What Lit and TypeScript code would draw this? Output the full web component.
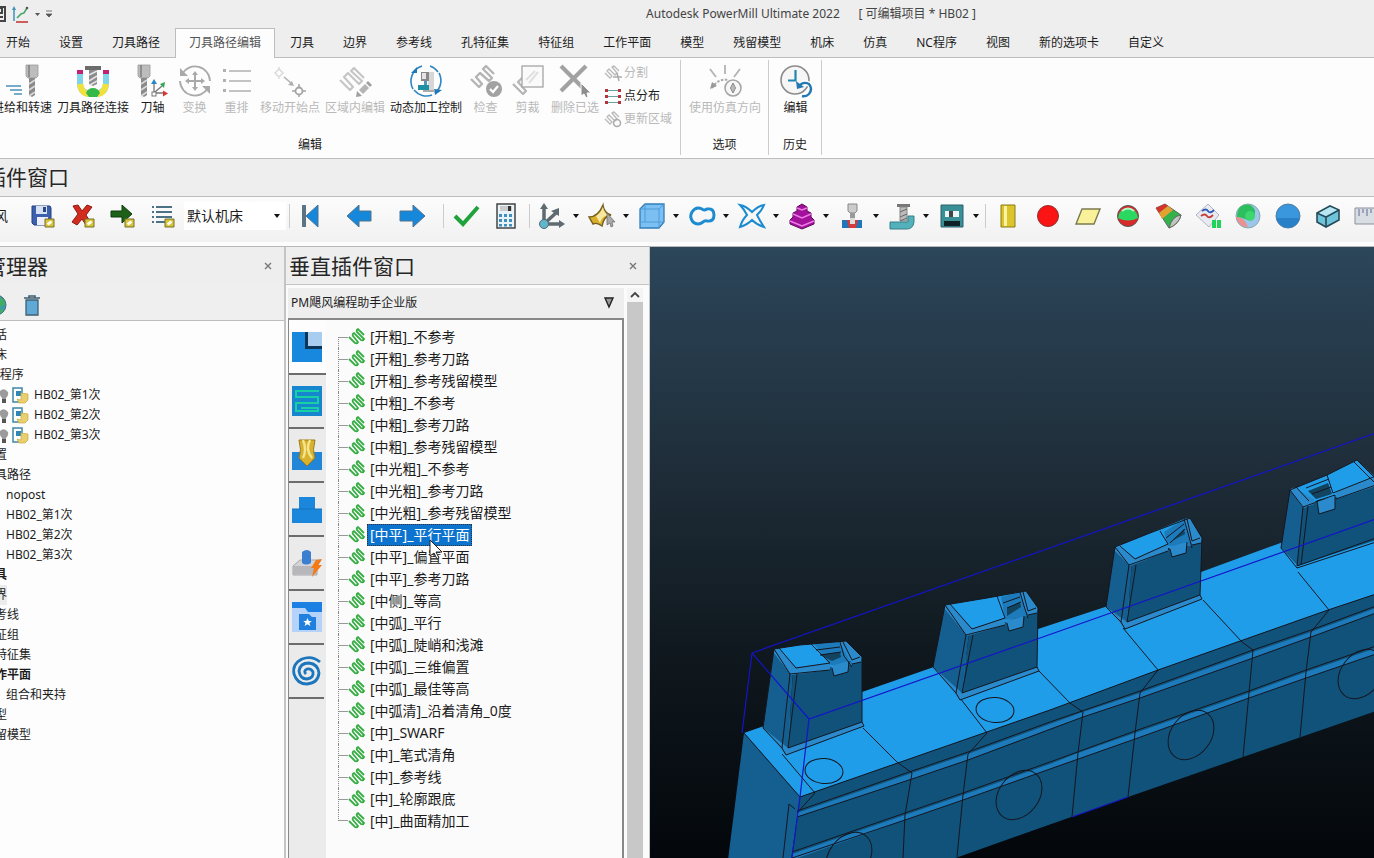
import { LitElement, html, svg, css, TemplateResult, SVGTemplateResult } from "lit";
import { customElement } from "lit/decorators.js";
import { classMap } from "lit/directives/class-map.js";

type Art = SVGTemplateResult;

const icon = (size: number, art: Art): TemplateResult =>
  html`<svg class="icon" width=${size} height=${size} viewBox="0 0 ${size} ${size}" fill="none" aria-hidden="true">${art}</svg>`;

/* ---------- ribbon artwork (32 x 32) ---------- */
const cutter = (x: number): Art => svg`
  <path d="M${x} 0h12v11l-2 2h-8l-2-2z" fill="#bdbdbd" stroke="#9a9a9a" stroke-width=".8"/>
  <path d="M${x + 2} 0h2v12h-2z" fill="#8d8d8d"/>
  <path d="M${x + 3} 13h6v17l-3 2-3-2z" fill="#8a8a8a"/>
  <path d="M${x + 3} 19l6-4M${x + 3} 25l6-4M${x + 3} 31l6-4" stroke="#d9d9d9" stroke-width="1.6"/>`;

const ribbonArt: Record<string, Art> = {
  feed: svg`<path d="M0 21h15M4 25h12M8 29h8" stroke="#4a90b8" stroke-width="1.300"/>${cutter(20)}`,
  link: svg`
    <path d="M3 5v13c0 8 5 11 13 11s13-3 13-11V5" stroke="#7fd4ea" stroke-width="6"/>
    <path d="M3 19c1 7 5 10 8 10M29 19c-1 7-5 10-8 10" stroke="#f2e13a" stroke-width="6"/>
    <path d="M9 28q2-5 7-5t7 5l-3 4h-8z" fill="#35b84a"/>
    <path d="M0 5h6v4H0zM26 5h6v4h-6z" fill="#c22173"/>
    <path d="M8 1h16v4H8z" fill="#6c6c6c"/><path d="M12 5h8v14l-4 2-4-2z" fill="#8b8b8b"/>
    <path d="M12 10l8-4M12 16l8-5M13 20l7-4" stroke="#e3e3e3" stroke-width="1.500"/>`,
  axis: svg`${cutter(1)}
    <path d="M17 28V18M18 28h9M18 27l7-6" stroke="#777" stroke-width="1.300"/>
    <path d="M17 14l3 5h-6z" fill="#2b86c4"/><path d="M31 28.500l-5 3v-6z" fill="#d33"/><path d="M28 17l-1 6-4-4z" fill="#2fa84f"/>
    <rect x="15" y="27" width="4" height="4" fill="#fff" stroke="#777"/>`,
  transform: svg`
    <path d="M3 9A15 15 0 0 1 31 16M29 23A15 15 0 0 1 1 16" stroke="#a9a9a9" stroke-width="1.800"/>
    <path d="M1 3v8h8zM31 29v-8h-8z" fill="#a9a9a9"/>
    <path d="M16 9v15M9 16h15" stroke="#a9a9a9" stroke-width="2"/>
    <path d="M16 6l3 4h-6zM16 26l3-4h-6zM6 16l4-3v6zM26 16l-4-3v6z" fill="#a9a9a9"/>`,
  reorder: svg`
    <path d="M8 6h22M8 16h22M8 26h22" stroke="#b0b0b0" stroke-width="1.400"/>
    <path d="M2 4h3v3H2zM2 14h3v3H2zM2 24h3v3H2z" fill="#b0b0b0"/>`,
  start: svg`
    <path d="M5 4l4 4-4 4-4-4zM5 2v3M5 11v3" stroke="#d8d8d8" stroke-width="1.400"/>
    <path d="M10 12l7 6" stroke="#b0b0b0" stroke-width="1.600"/><path d="M20 21l-6-1 4-4z" fill="#b0b0b0"/>
    <circle cx="25" cy="26" r="3.500" stroke="#a3a3a3" stroke-width="1.800"/>
    <path d="M25 19v4M25 29v3M18 26h4M28 26h4" stroke="#a3a3a3" stroke-width="1.500"/>`,
  region: svg`
    <path d="M1 15l10 10 3-3L5 12l4-4 11 11 3-3L12 6l3-3 10 10" stroke="#c6c6c6" stroke-width="2.200" stroke-linejoin="round"/>
    <path d="M20 25l6-6 4 4-6 6z" fill="#b4b4b4"/><path d="M18 26l5 5-6 1z" fill="#9f9f9f"/><path d="M27 18l2-2 4 4-2 2z" fill="#9f9f9f"/>`,
  dynamic: svg`
    <path d="M3 24A16 16 0 0 1 12 1M20 1a16 16 0 0 1 8 6M29 8a16 16 0 0 1-4 20M22 30A16 16 0 0 1 4 25" stroke="#2f87c2" stroke-width="1.600"/>
    <path d="M7 2v6H1zM32 25l-7 5-1-6z" fill="#1e78b8"/>
    <path d="M18 7h6v18h-6z" fill="#d6d6d6"/><path d="M11 7h8v9h-8z" fill="#888"/><path d="M12 8h4v6h-4z" fill="#e5e5e5"/><path d="M14 16h3v5h-3z" fill="#4b98b8"/>
    <path d="M8 20h11v5H8z" fill="#1d90a4"/><path d="M13 25h12v2H13z" fill="#aaa"/>`,
  check: svg`
    <path d="M1 14l8 8 3-3-6-7 4-4 9 8 3-3-9-9 3-3 8 8" stroke="#b5b5b5" stroke-width="2.400" stroke-linejoin="round"/>
    <circle cx="24" cy="24" r="8" fill="#a2a2a2"/><path d="M20 24l3 3 5-6" stroke="#fff" stroke-width="2.200"/>`,
  trim: svg`
    <path d="M1 19l10 10 3-3-8-9 4-4 5 4" stroke="#b5b5b5" stroke-width="2.200" stroke-linejoin="round"/>
    <rect x="10" y="1" width="21" height="21" fill="#fafafa" stroke="#a5a5a5" stroke-width="1.300"/>
    <path d="M14 15l9-9M17 18l9-11" stroke="#e0e0e0" stroke-width="2"/>`,
  remove: svg`
    <path d="M2 1l25 25M27 1L2 26" stroke="#a2a2a2" stroke-width="4.200"/>
    <path d="M22 18v13l3-2 2 4 2-1-1-4h4z" fill="#8e8e8e" stroke="#fff"/>`,
  sim: svg`
    <path d="M1 4l6 8M16 0v9M31 4l-6 8" stroke="#b3b3b3" stroke-width="1.800"/>
    <path d="M3 23q6-10 17-8" stroke="#aaa" stroke-width="2" stroke-dasharray="2.500 1.500"/><path d="M1 24l2-7 5 4z" fill="#999"/>
    <circle cx="24" cy="23" r="8" fill="#f7f7f7" stroke="#a6a6a6" stroke-width="1.600"/><path d="M24 18l2.500 5-2.500 5-2.500-5z" fill="#bbb" stroke="#888"/>`,
  history: svg`
    <circle cx="15" cy="15" r="14" fill="#f6f6f6" stroke="#8b8b8b" stroke-width="1.600"/>
    <path d="M15.500 5v10.500H8" stroke="#1f86b3" stroke-width="2.200"/>
    <path d="M19 21q4-5 10-2 4 5 0 10-3 3-7 2" stroke="#fdfdfd" stroke-width="5"/>
    <path d="M19 21q4-5 10-2 4 5 0 10-3 3-7 2" stroke="#2477b2" stroke-width="2.400"/><path d="M16 16l1 8 7-2z" fill="#2477b2"/>`,
};

const smallSnake: Art = svg`<path d="M0 8l5 5 2-2-5-5 2-2 6 6 2-2-5-6 2-1 5 5" stroke="#bbb" stroke-width="1.400" stroke-linejoin="round"/>`;
const smallArt: Record<string, Art> = {
  split: svg`${smallSnake}<path d="M8 12h9M12 8l2 8" stroke="#aaa" stroke-width="1.500"/>`,
  points: svg`<path d="M2 2.500h13M2 8.500h13M2 14.500h13" stroke="#68a3a3" stroke-width="1.200"/>
    <path d="M0 1h3v3H0zM13 1h3v3H13zM0 7h3v3H0zM13 7h3v3H13zM0 13h3v3H0zM13 13h3v3H13z" fill="#b8323c"/>`,
  refresh: svg`${smallSnake}<circle cx="12" cy="12" r="3.500" stroke="#aaa" stroke-width="1.500"/>`,
};

/* ---------- horizontal toolbar artwork (26 x 26) ---------- */
const badge: Art = svg`<path d="M15 16h9v8h-9z" fill="#d9c53a" stroke="#77702c"/><path d="M17 21l4-3M18 22l4-3" stroke="#fff" stroke-width="1.300"/>`;
const barArt: Record<string, Art> = {
  save: svg`<path d="M2 3h18l1 2v17H4l-2-2z" fill="#3c5fae" stroke="#23407e"/><path d="M6 3h11v8H6z" fill="#d6e1f3"/><path d="M13 4h3v5h-3z" fill="#2d4684"/><path d="M7 14h11v8H7z" fill="#eef"/>${badge}`,
  del: svg`<path d="M3 3l5-1 4 6 5-6 5 2-6 8 5 8-5 2-4-6-5 6-5-3 6-8z" fill="#d22b1f" stroke="#8d1912"/>${badge}`,
  export: svg`<path d="M1 8h11V2l10 9-10 9v-6H1z" fill="#1d6118" stroke="#0f3c0c"/>${badge}`,
  list: svg`<path d="M6 4h16M6 9h16M6 14h16M6 19h16" stroke="#4a7186" stroke-width="2"/><path d="M2 4h2M2 9h2M2 14h2M2 19h2" stroke="#4a7186" stroke-width="2"/>${badge}`,
  first: svg`<path d="M3 2h4v22H3z" fill="#5c7384"/><path d="M19 2v22L7 13z" fill="#1588dc" stroke="#55738a"/>`,
  prev: svg`<path d="M1 13L13 2v6h12v10H13v6z" fill="#1588dc" stroke="#55738a"/>`,
  next: svg`<path d="M25 13L13 2v6H0v10h13v6z" fill="#1588dc" stroke="#55738a"/>`,
  ok: svg`<path d="M2 13l8 8L25 4" stroke="#20a33c" stroke-width="4"/>`,
  calc: svg`<path d="M4 1h18v24H4z" fill="#e9f3fa" stroke="#444" stroke-width="1.500"/><path d="M7 3h12v5H7z" fill="#ccc"/><path d="M15 3h3v5h-3z" fill="#333"/>
    <path d="M6 11h3v3H6zM11 11h3v3h-3zM16 11h3v3h-3zM6 16h3v3H6zM11 16h3v3h-3zM16 16h3v3h-3zM6 21h3v2.500H6zM11 21h3v2.500h-3zM16 21h3v2.500h-3z" fill="#3f8ebc"/>`,
  frame: svg`<path d="M5 21V4M6 21h17M6 20L18 9" stroke="#5f6a70" stroke-width="3.500"/><path d="M5 0l4 6H1zM20 5v8l-8-5zM26 21l-6 4v-8z" fill="#5f6a70"/><circle cx="5" cy="21" r="4.500" fill="#62b6cc" stroke="#4d6a76"/>`,
  surface: svg`<path d="M0 14q9 0 14-12 1 8 8 10-7 1-9 11Q8 19 4 21z" fill="#d9ae2b" stroke="#73601f" stroke-width="1.400"/><path d="M7 13q5-3 7-9 1 6 5 8-6 1-8 8z" fill="#f6e8a0"/><path d="M18 10v12l3-2 1 4 2-1-1-4h3z" fill="#aaa" stroke="#666" stroke-width=".7"/>`,
  block: svg`<path d="M1 6l5-5h19v18l-5 6H1z" fill="#7cc0f3" stroke="#2f7db8" stroke-width="1.300"/><path d="M1 6h19v19M20 6l5-5M6 1v18H1M6 19h19" stroke="#4d9cd6"/>`,
  boundary: svg`<path d="M4 19q-4-5-1-10 4-6 10-3 2 2 5 0 7-1 7 6t-7 6q-2-1-4 1-5 4-10 0z" stroke="#1c8bd0" stroke-width="3"/>`,
  pattern: svg`<path d="M1 2q6 1 12 7Q19 3 25 2q-2 5-7 10 3 6 7 12-7-2-12-7-5 5-12 7 2-7 7-12Q5 6 1 2z" stroke="#1c8bd0" stroke-width="2"/>`,
  pyramid: svg`<path d="M13 1l5 3v4l4 2v4l3 3v4l-12 5-12-5v-4l3-3v-4l4-2V4z" fill="#a3109c" stroke="#5d0a5a"/><path d="M8 5l5 2 5-2M4 11l9 4 9-4M1 18l12 5 12-5" stroke="#ec7be6" stroke-width="1.500"/>`,
  tool: svg`<path d="M9 1h9v7l-2 2h-5l-2-2z" fill="#ccc" stroke="#888"/><path d="M11 10h5v9h-5z" fill="#999"/><path d="M3 17h20v8H3z" fill="#2175b9"/><path d="M8 17h11l-2 8h-7z" fill="#d43c3c"/><path d="M11 15h5v6h-5z" fill="#ddd"/>`,
  holder: svg`<path d="M8 1h13v3H8z" fill="#777"/><path d="M11 4h7v14h-7z" fill="#bbb" stroke="#888"/><path d="M11 9l7-3M11 14l7-3M11 18l7-3" stroke="#666"/><path d="M1 19h18v-6h6v6q-1 7-7 7H1z" fill="#52b1bb" stroke="#367f88"/>`,
  machine: svg`<path d="M2 2h22v22H2z" fill="#3a8f97" stroke="#2a6168"/><path d="M6 8h14v6H6z" fill="#e9f5f6"/><path d="M10 8h4v6h-4z" fill="#444"/><path d="M5 18h16v5H5z" fill="#0f2226"/>`,
  cyl: svg`<path d="M6 2h14v22H6z" fill="#dcc52a" stroke="#8c7c14"/><path d="M9 3h3v20H9z" fill="#fbf3a4"/>`,
  ball: svg`<circle cx="13" cy="13" r="10.500" fill="#fa1414" stroke="#8e2a2a"/>`,
  plane: svg`<path d="M7 6h18l-6 15H1z" fill="#f8f19a" stroke="#7a7a50" stroke-width="1.400"/>`,
  half: svg`<circle cx="13" cy="13" r="10.500" fill="#d92a2a" stroke="#555"/><path d="M3 15a10 10 0 1 1 20 0q-10 5-20 0z" fill="#2bd860"/><path d="M7 8q6-5 12 0" stroke="#b9f7cb" stroke-width="2"/>`,
  cone: svg`<path d="M1 5l9-4 16 11q-2 9-12 13z" fill="#32b24a" stroke="#666"/><path d="M1 5l9-4 3 2-9 7z" fill="#d8322c"/><path d="M4 10l9-7 5 4-11 9z" fill="#e3a132"/><path d="M26 12q-9 1-12 13 10-4 12-13z" fill="#bfc8c0" stroke="#666"/>`,
  chart: svg`<path d="M1 12L13 1l11 11-10 12z" fill="#e7eaf0" stroke="#b1b7c4"/><path d="M7 8q4-3 6 0t6-1" stroke="#2f59b5" stroke-width="1.800"/><path d="M6 13q4-3 6 0t6-1" stroke="#c73a3a" stroke-width="1.800"/><path d="M17 17h4v8h-4zM22 17h4v8h-4z" fill="#1fd458"/>`,
  globe: svg`<circle cx="13" cy="13" r="12" fill="#9cc6ec" stroke="#8aa"/><path d="M5 4q10-6 15 3 1 9-7 10Q5 14 2 14q0-6 3-10z" fill="#2dbf5f"/><path d="M1 14q8-1 12 10-10 0-12-10z" fill="#e89292"/><circle cx="15" cy="13" r="5" fill="#3dd66f"/>`,
  sphere: svg`<circle cx="13" cy="13" r="12" fill="#3b97dd" stroke="#4a7ea6"/><path d="M1.500 15h23q-2 9-11.500 9.500Q4 24 1.500 15z" fill="#2a80c6"/>`,
  box: svg`<path d="M2 10l13-7 9 4v10l-13 7-9-5z" fill="#6fc3da" stroke="#274a58" stroke-width="1.600"/><path d="M2 10l9 4 13-7M11 14v10" stroke="#274a58" stroke-width="1.600"/><path d="M4 10l11-6 7 3-11 6z" fill="#b9e6f0"/>`,
  ruler: svg`<path d="M0 5h27v16H0z" fill="#d9dde4" stroke="#8a8f99"/><path d="M4 6v7M8 6v4M12 6v7M16 6v4M20 6v7" stroke="#5c6c93"/>`,
};

/* ---------- plug-in side tabs (30 x 30) ---------- */
const sideArt: Art[] = [
  svg`<path d="M0 0h30v30H0z" fill="#1888de"/><path d="M13 0h3v14h14v3H13z" fill="#0d3557"/><path d="M16 0h14v14H16z" fill="#a9cdee"/>`,
  svg`<path d="M0 0h30v30H0z" fill="#1687cf"/><path d="M27 5H4v6h22v6H4v8h22v-3H9" stroke="#17d0a4" stroke-width="2"/>`,
  svg`<path d="M0 12h30v18H0z" fill="#2186d8"/><path d="M7 0h16q-3 10 0 18l-8 8-8-8q3-8 0-18z" fill="#d8b12e" stroke="#9b7a16"/><path d="M11 0q4 10 0 18M18 0q-5 10 2 18" stroke="#f6e58c" stroke-width="2.400"/>`,
  svg`<path d="M7 3h16v12h7v14H0V15h7z" fill="#1a87dc"/><path d="M0 15h30" stroke="#1272bf"/>`,
  svg`<path d="M1 18l7-6h21l-4 7v8H1z" fill="#d3d3d8" stroke="#a5a5aa"/><path d="M1 18h24v8H1z" fill="#b6b6bb"/><path d="M10 4q5-4 9 0v11q-5 3-9 0z" fill="#3b7fd0"/><path d="M24 12l6-1-4 6h4L20 29l2-9h-3z" fill="#f57a14"/>`,
  svg`<path d="M0 0h30v30H0z" fill="#b5d3fa"/><path d="M0 0h30v10H16l-3-4H0z" fill="#1b7fe4"/><path d="M7 12h10l3 3h4v13H7z" fill="#1f80dd"/><path d="M15.500 16l1.300 3h3l-2.400 2 1 3-2.900-1.800-2.900 1.800 1-3-2.400-2h3z" fill="#fff"/>`,
  svg`<path d="M28 6Q20-1 10 3 0 8 2 18q3 10 13 10 11-1 12-11-1-9-10-10-9 0-10 8 1 8 8 8 7-1 6-7-2-4-6-3-4 2-1 5" stroke="#1b76bd" stroke-width="2.800"/>`,
];

const leafGlyph: Art = svg`
  <path d="M1 9l6 6q2 1 3-1L5 8q-1-2 1-3l7 7q2 1 3-1L9 4q-1-2 1-3l6 6" stroke="#35ad43" stroke-width="1.800"/>`;

const baseCss = css`
  * { box-sizing: border-box; }
  :host { box-sizing: border-box; font: 12px/16px "Noto Sans", "Noto Sans CJK SC", sans-serif; color: #1c1c1c; }
  button, select { font: inherit; color: inherit; background: none; border: 0; margin: 0; padding: 0; text-align: left; }
  ul { list-style: none; margin: 0; padding: 0; }
  h2 { font-size: 21px; line-height: 28px; font-weight: 400; margin: 0; white-space: nowrap; color: #262626; }
  .icon { display: block; flex: none; overflow: visible; }
`;

/* ================= ribbon ================= */
const TABS = ["开始", "设置", "刀具路径", "刀具路径编辑", "刀具", "边界", "参考线", "孔特征集", "特征组", "工作平面", "模型", "残留模型", "机床", "仿真", "NC程序", "视图", "新的选项卡", "自定义"];
const EDIT: [string, string, boolean][] = [
  ["feed", "进给和转速", true], ["link", "刀具路径连接", true], ["axis", "刀轴", true], ["transform", "变换", false],
  ["reorder", "重排", false], ["start", "移动开始点", false], ["region", "区域内编辑", false], ["dynamic", "动态加工控制", true],
  ["check", "检查", false], ["trim", "剪裁", false], ["remove", "删除已选", false],
];
const SMALL: [string, string, boolean][] = [["split", "分割", false], ["points", "点分布", true], ["refresh", "更新区域", false]];

@customElement("pm-ribbon")
class PmRibbon extends LitElement {
  static styles = [baseCss, css`
    :host { display: block; background: #eee; overflow: hidden; flex: none; }
    .titlebar { display: flex; align-items: center; height: 28px; position: relative; }
    .quick { display: flex; align-items: center; gap: 6px; }
    .title { position: absolute; left: 0; right: 0; text-align: center; padding-left: 248px; font-size: 12px; color: #444; white-space: pre; }
    .tabs { display: flex; gap: 1px; height: 30px; margin-left: -8px; border-bottom: 1px solid #bdbdbd; }
    .tab { padding: 0 14px 2px; height: 30px; white-space: nowrap; flex: none; border: 1px solid transparent; border-width: 1px 0 0; }
    .tab.active { background: #fdfdfd; border: 1px solid #bdbdbd; border-bottom: 0; padding: 0 13px 2px; color: #555; }
    .body { display: flex; height: 101px; background: #fdfdfd; border-bottom: 1px solid #bdbdbd; padding: 2px 0 3px; margin-left: -60px; }
    .group { display: flex; flex-direction: column; border-right: 1px solid #ccc; }
    .edit .items { padding-left: 49px; padding-right: 8px; }
    .pad { padding: 0 5px; }
    .items { display: flex; flex: 1; padding-top: 5px; }
    .name { text-align: center; height: 20px; line-height: 20px; }
    .cmd { display: flex; flex-direction: column; align-items: center; gap: 3px; min-width: 42px; padding: 0 2px 0 3px; height: 52px; white-space: nowrap; }
    .stack { display: flex; flex-direction: column; gap: 7px; padding-left: 4px; }
    .mini { display: flex; align-items: center; gap: 2px; white-space: nowrap; height: 16px; }
    button:disabled { color: #b9b9b9; }
  `];

  private cmd([art, label, on]: [string, string, boolean]) {
    return html`<button class="cmd" ?disabled=${!on}>${icon(32, ribbonArt[art])}<span>${label}</span></button>`;
  }

  render() {
    return html`
      <header class="titlebar">
        <div class="quick">
          ${icon(6, svg`<path d="M-6-4H5V10H-6" stroke="#444" stroke-width="2"/><path d="M-2-3h4v5h-4M-3 6h6" stroke="#444" stroke-width="2"/>`)}
          ${icon(17, svg`<path d="M2 15V2" stroke="#3e93b8" stroke-width="1.500"/><path d="M2 0l2 4H0z" fill="#3e93b8"/><path d="M4 16h12" stroke="#c23a3a" stroke-width="1.600"/><path d="M5 12l4-4 3-1 3-5" stroke="#3fa564" stroke-width="1.500"/><circle cx="15" cy="2" r="1.300" fill="#555"/>`)}
          ${icon(5, svg`<path d="M0 1h5L2.500 4z" fill="#555"/>`)}
          ${icon(6, svg`<path d="M0 0h6M0 3h6L3 6z" fill="#555" stroke="#555" stroke-width=".8"/>`)}
        </div>
        <div class="title">Autodesk PowerMill Ultimate 2022      [ 可编辑项目 * HB02 ]</div>
      </header>
      <nav class="tabs">${TABS.map((t, i) => html`<button class=${classMap({ tab: true, active: i === 3 })}>${t}</button>`)}</nav>
      <div class="body">
        <section class="group edit">
          <div class="items">
            ${EDIT.map((c) => this.cmd(c))}
            <div class="stack">${SMALL.map(([a, l, on]) => html`<button class="mini" ?disabled=${!on}>${icon(17, smallArt[a])}<span>${l}</span></button>`)}</div>
          </div>
          <div class="name">编辑</div>
        </section>
        <section class="group pad">
          <div class="items">${this.cmd(["sim", "使用仿真方向", false])}</div>
          <div class="name">选项</div>
        </section>
        <section class="group pad">
          <div class="items">${this.cmd(["history", "编辑", true])}</div>
          <div class="name">历史</div>
        </section>
      </div>`;
  }
}

/* ================= horizontal plug-in bar ================= */
@customElement("pm-plugin-bar")
class PmPluginBar extends LitElement {
  static styles = [baseCss, css`
    :host { display: block; overflow: hidden; flex: none; background: #fcfcfc; padding-bottom: 4px; border-bottom: 1px solid #b8b8b8; }
    .head { background: #eee; border-bottom: 1px solid #bdbdbd; height: 38px; padding-top: 4px; }
    .head h2 { margin-left: -57px; }
    .bar { display: flex; align-items: center; height: 45px; padding-bottom: 8px; background: linear-gradient(#fcfcfc, #f1f1f1); }
    .brand { width: 23px; flex: none; }
    .brand span { display: block; margin-left: -20px; font-size: 14px; white-space: nowrap; }
    .btn { width: 40px; flex: none; display: flex; justify-content: center; }
    .wide { width: 54px; }
    .drop { width: 50px; flex: none; display: flex; align-items: center; justify-content: space-between; padding: 0 3px 0 7px; }
    .sep { width: 1px; height: 24px; margin: 0 2px 0 3px; background: #ccc; flex: none; }
    .pick { position: relative; width: 102px; height: 28px; flex: none; margin-left: 1px; background: #fff; display: flex; align-items: center; }
    .pick select { appearance: none; width: 100%; padding-left: 3px; font-size: 14px; line-height: 20px; }
    .pick .icon { position: absolute; right: 6px; pointer-events: none; }
  `];

  private btn(a: string, wide = false) {
    return html`<button class=${classMap({ btn: true, wide })} aria-label=${a}>${icon(26, barArt[a])}</button>`;
  }

  render() {
    const caret = icon(6, svg`<path d="M0 1h6L3 5z" fill="#111"/>`);
    return html`
      <div class="head"><h2>水平插件窗口</h2></div>
      <div class="bar">
        <div class="brand"><span>飓风</span></div>
        ${["save", "del", "export", "list"].map((a) => this.btn(a))}
        <label class="pick"><select aria-label="机床"><option>默认机床</option></select>${caret}</label>
        <i class="sep"></i>
        ${this.btn("first")}${this.btn("prev", true)}${this.btn("next", true)}
        <i class="sep"></i>
        ${this.btn("ok")}${this.btn("calc")}
        <i class="sep"></i>
        ${["frame", "surface", "block", "boundary", "pattern", "pyramid", "tool", "holder", "machine"].map(
          (a) => html`<button class="drop" aria-label=${a}>${icon(26, barArt[a])}${caret}</button>`)}
        <i class="sep"></i>
        ${["cyl", "ball", "plane", "half", "cone", "chart", "globe", "sphere", "box", "ruler"].map((a) => this.btn(a))}
      </div>`;
  }
}

/* ================= explorer ================= */
type TreeRow = { t: string; kind?: "nc" | "child"; bold?: boolean; hot?: boolean };
const ROWS: TreeRow[] = [
  { t: "会话" }, { t: "机床" }, { t: "NC程序" },
  { t: "HB02_第1次", kind: "nc" }, { t: "HB02_第2次", kind: "nc" }, { t: "HB02_第3次", kind: "nc" },
  { t: "设置" }, { t: "刀具路径" },
  { t: "nopost", kind: "child" }, { t: "HB02_第1次", kind: "child" }, { t: "HB02_第2次", kind: "child" }, { t: "HB02_第3次", kind: "child" },
  { t: "刀具", bold: true }, { t: "边界", hot: true }, { t: "参考线" }, { t: "特征组" }, { t: "孔特征集" },
  { t: "工作平面", bold: true }, { t: "组合和夹持", kind: "child" }, { t: "模型" }, { t: "残留模型" },
];

const closeX = icon(8, svg`<path d="M1 1l6 6M7 1L1 7" stroke="#777" stroke-width="1.400"/>`);

@customElement("pm-explorer")
class PmExplorer extends LitElement {
  static styles = [baseCss, css`
    :host { display: flex; flex-direction: column; width: 284px; flex: none; overflow: hidden; background: #fdfdfd; }
    .head { display: flex; align-items: center; justify-content: space-between; height: 37px; background: #eee; padding-right: 12px; flex: none; }
    .head h2 { margin-left: -57px; }
    .tools { display: flex; align-items: center; gap: 18px; height: 37px; background: #efefef; border-bottom: 1px solid #bdbdbd; flex: none; padding-top: 6px; }
    .tree { margin-left: -17px; padding-top: 4px; }
    .row { display: flex; align-items: center; height: 20px; white-space: nowrap; width: max-content; }
    .nc { padding-left: 17px; gap: 5px; }
    .child { padding-left: 23px; }
    .bold { font-weight: 600; }
    .hot { background: #ececec; }
    .marks { display: flex; gap: 4px; }
  `];

  render() {
    return html`
      <div class="head"><h2>资源管理器</h2><button aria-label="关闭">${closeX}</button></div>
      <div class="tools">
        <button aria-label="地球">${icon(6, svg`<circle cx="-4" cy="3" r="10" fill="#3d9aa8" stroke="#4a6f78"/><path d="M-3-6q7 2 8 8l-4 3-5-4zM-1 8l5-1-3 5z" fill="#3fae62"/>`)}</button>
        <button aria-label="删除">${icon(16, svg`<path d="M2 3h12v15H2z" fill="#5ea9d6" stroke="#3f5f72" stroke-width="1.300"/><path d="M0 1h16M5-1h6v2H5z" stroke="#3f5f72" stroke-width="1.600"/>`)}</button>
      </div>
      <ul class="tree">
        ${ROWS.map((n) => html`<li class=${classMap({ row: true, nc: n.kind === "nc", child: n.kind === "child", bold: !!n.bold, hot: !!n.hot })}>
          ${n.kind === "nc" ? html`<span class="marks">
            ${icon(8, svg`<path d="M0 4q4-4 8 1 1 3-2 6v3H2v-3Q-1 8 0 4z" fill="#9b9b9b"/><path d="M2 12h4v4H2z" fill="#555"/>`)}
            ${icon(17, svg`<path d="M1 1h9v14H1z" fill="#fff" stroke="#3d86a8" stroke-width="1.500"/><path d="M4 4h5v5H4z" fill="#2f86b8"/><path d="M9 6l7 1v6l-3 3H7l-2-4 4 1z" fill="#e8cf70" stroke="#c8a93a" stroke-width=".7"/>`)}
          </span>` : ""}<span>${n.t}</span></li>`)}
      </ul>`;
  }
}

/* ================= vertical plug-in panel ================= */
const STRATEGIES = [
  "[开粗]_不参考", "[开粗]_参考刀路", "[开粗]_参考残留模型", "[中粗]_不参考", "[中粗]_参考刀路", "[中粗]_参考残留模型",
  "[中光粗]_不参考", "[中光粗]_参考刀路", "[中光粗]_参考残留模型", "[中平]_平行平面", "[中平]_偏置平面", "[中平]_参考刀路",
  "[中侧]_等高", "[中弧]_平行", "[中弧]_陡峭和浅滩", "[中弧]_三维偏置", "[中弧]_最佳等高", "[中弧清]_沿着清角_0度",
  "[中]_SWARF", "[中]_笔式清角", "[中]_参考线", "[中]_轮廓跟底", "[中]_曲面精加工",
];

@customElement("pm-strategies")
class PmStrategies extends LitElement {
  static styles = [baseCss, css`
    :host { display: flex; flex-direction: column; width: 366px; flex: none; background: #fbfbfb; border: 1px solid #c4c4c4; border-width: 0 1px 0 2px; }
    .head { display: flex; align-items: center; justify-content: space-between; height: 38px; background: #eee; border-bottom: 1px solid #c4c4c4; padding: 0 12px 0 3px; flex: none; }
    .main { display: flex; flex: 1; min-height: 0; padding: 3px 6px 0 2px; }
    .plug { flex: 1; display: flex; flex-direction: column; min-width: 0; }
    .bar { display: flex; align-items: center; justify-content: space-between; height: 30px; background: #eee; padding: 0 10px 0 3px; flex: none; }
    .body { display: flex; flex: 1; min-height: 0; border: 1px solid #888; border-width: 2px 2px 0 1px; }
    .side { width: 37px; background: #ebebeb; flex: none; }
    .pick { display: flex; align-items: center; justify-content: center; width: 35px; height: 54px; border-bottom: 2px solid #6c6c6c; }
    .pick.on { background: #fdfdfd; width: 37px; height: 55px; padding: 1px 2px 0 0; }
    .list { padding: 6px 0 0 12px; flex: 1; overflow: hidden; }
    .leaf { display: flex; align-items: center; height: 22px; position: relative; font-size: 14px; line-height: 20px; white-space: nowrap; }
    .twig { width: 10px; height: 22px; border-left: 1px dotted #888; display: flex; align-items: center; }
    .twig::after { content: ""; flex: 1; border-top: 1px solid #999; }
    .leaf:first-child .twig { height: 11px; align-self: flex-end; align-items: flex-start; }
    .leaf:last-child .twig { height: 11px; align-self: flex-start; align-items: flex-end; }
    .label { padding: 0 2px; margin-left: 1px; height: 22px; border: 1px solid transparent; }
    .label.on { background: #0c74cf; color: #fff; border: 1px dotted #333; }
    .cursor { position: absolute; left: 92px; top: 16px; z-index: 1; }
    .scroll { width: 16px; background: #f4f4f4; display: flex; flex-direction: column; align-items: center; margin-left: 3px; }
    .up { height: 14px; display: flex; align-items: center; }
    .thumb { flex: 1; width: 16px; background: #c8c8c8; }
  `];

  render() {
    return html`
      <div class="head"><h2>垂直插件窗口</h2><button aria-label="关闭">${closeX}</button></div>
      <div class="main">
        <div class="plug">
          <div class="bar"><span>PM飓风编程助手企业版</span>
            <button aria-label="菜单">${icon(10, svg`<path d="M1 0h8L5 9z" fill="#999" stroke="#222" stroke-width="1.400"/>`)}</button></div>
          <div class="body">
            <div class="side">${sideArt.map((a, i) => html`<button class=${classMap({ pick: true, on: i === 0 })} aria-label="分类 ${i + 1}">${icon(30, a)}</button>`)}</div>
            <ul class="list">
              ${STRATEGIES.map((s, i) => html`<li class="leaf"><i class="twig"></i>${icon(18, leafGlyph)}<button class=${classMap({ label: true, on: i === 9 })}>${s}</button>
                ${i === 9 ? html`<span class="cursor">${icon(12, svg`<path d="M0 0v16l4-3 3 6 2-1-3-6h6z" fill="#fff" stroke="#222"/>`)}</span>` : ""}</li>`)}
            </ul>
          </div>
        </div>
        <div class="scroll"><button class="up" aria-label="向上滚动">${icon(8, svg`<path d="M0 6l4-4 4 4" stroke="#444" stroke-width="1.800"/>`)}</button><div class="thumb"></div></div>
      </div>`;
  }
}

/* ================= 3D view ================= */
@customElement("pm-viewport")
class PmViewport extends LitElement {
  static styles = [baseCss, css`
    :host { display: block; flex: 1; min-width: 0; background: linear-gradient(#2c465a, #1f2e3a 35%, #10191f 65%, #03070b); }
    .scene { display: block; width: 100%; height: 100%; }
    .top { fill: #209de9; }
    .side { fill: #145f8f; }
    .front { fill: #10527a; }
    .round { fill: #2a8acb; }
    .groove { fill: #1d7bbb; }
    .pocket { fill: #12435f; }
    .ink { stroke: #15161f; stroke-width: 1; fill: none; stroke-linejoin: round; }
    .wire { stroke: #1414c8; stroke-width: 1.2; fill: none; }
  `];

  render() {
    return html`<svg class="scene" viewBox="650 247 724 611" preserveAspectRatio="xMinYMin slice" role="img" aria-label="模型">
      <path class="side" d="M744 733L800 797 791 860H728z"/>
      <path class="front" d="M800 797L1050 710 1158 670 1328 610 1376 594V711L1243 757 1128 797 1040 828 950 860H791z"/>
      <path class="top" d="M744 733L862 692 931 668 1038 629 1105 607 1201 572 1275 545 1376 508V594L1328 610 1158 670 1050 710 800 797z"/>
      <path class="wire" d="M752 653L1376 433M752 653L742 733"/>
      <path class="groove" d="M797 813L912 773 968 754 1050 724 1083 712 1140 693 1253 652 1311 632 1376 608V613L1311 637 1253 658 1140 698 1083 717 1050 729 968 760 912 779 797 817z"/>
      <path class="groove" d="M792 854L905 815 963 795 1050 764 1078 753 1135 733 1249 693 1306 672 1376 648V654L1306 678 1249 698 1135 739 1078 759 1050 769 963 800 905 820 792 860z"/>
      <path class="ink" d="M744 733L800 797 1050 710 1158 670 1328 610 1376 594M797 811L912 771 968 752 1050 722 1140 691 1253 650 1311 630 1376 606M797 817L912 779 968 760 1083 717 1140 698 1253 658 1311 637 1376 613"/>
      <path class="ink" d="M792 852L905 813 963 793 1050 762 1135 731 1249 691 1306 670 1376 646M792 858L905 820 963 800 1050 769 1135 739 1249 698 1306 678 1376 654"/>
      <path class="ink" d="M782 754L815 793 797 813M863 728L897 762 912 773 905 815 903 858M960 698L987 733 968 754 963 795 957 857M1038 670L1070 703 1083 712 1078 753 1072 817M1123 628L1158 670 1140 693 1135 733 1128 797M1203 600L1242 642 1253 650 1249 693 1243 757M1298 572L1329 610 1311 632 1306 672 1300 737M789 804L783 858M789 804l6 5"/>
      <g class="ink">
        <ellipse cx="824" cy="771" rx="19" ry="12.500" transform="rotate(5 824 771)"/><ellipse cx="995" cy="710" rx="19" ry="12.500" transform="rotate(5 995 710)"/>
        <ellipse cx="1019" cy="795" rx="27" ry="20" transform="rotate(-52 1019 795)"/><ellipse cx="1191" cy="735" rx="27" ry="20" transform="rotate(-52 1191 735)"/>
        <ellipse cx="1361" cy="674" rx="27" ry="20" transform="rotate(-52 1361 674)"/><ellipse cx="849" cy="857" rx="27" ry="20" transform="rotate(-52 849 857)"/>
      </g>

      ${this.block([774, 649], [800, 645], [840, 642], [862, 657], [862, 722], [788, 748], [763, 728], [793, 672], [830, 667])}
      ${this.block([945, 605], [987, 598], [1020, 592], [1038, 608], [1037, 667], [962, 693], [933, 667], [969, 633], [1005, 622])}
      ${this.block([1115, 547], [1150, 533], [1184, 519], [1202, 538], [1200, 595], [1127, 622], [1106, 607], [1132, 563], [1168, 548])}

      <path class="side" d="M1290 490L1303 507 1297 565 1281 548z"/>
      <path class="front" d="M1303 507L1376 480V540L1297 566z"/>
      <path class="top" d="M1290 490L1327 475 1357 460 1376 478V482L1336 497 1318 500 1303 508z"/>
      <path class="round" d="M1290 490q2-3 5-2L1314 499v5L1304 508zM1336 492L1376 477V486L1337 499z"/>
      <path class="pocket" d="M1308 491L1328 483 1332 494 1316 499z"/>
      <path class="round" d="M1317 502L1335 496V509L1319 514z"/>
      <path class="ink" d="M1290 490L1281 548 1297 568 1376 542M1290 490L1327 475 1357 460 1376 479M1290 490L1303 507 1297 566 1376 538M1308 506L1301 565M1303 507L1314 503M1306 488L1329 479M1312 494L1331 487M1327 475L1333 493 1376 476M1336 499L1376 485M1317 501L1319 514 1335 509V495zM1296 487L1309 501M1354 462L1374 482"/>

      <path class="wire" d="M752 653L809 719 1040 638 1376 519M809 719L800 797 792 858M1072 817L1128 797"/>
    </svg>`;
  }

  /* One clamp post: back corners a b c, right edge d e, base f g, front corner h, notch start n. */
  private block(a: number[], b: number[], c: number[], d: number[], e: number[], f: number[], g: number[], h: number[], n: number[]) {
    const p = (q: number[], dx = 0, dy = 0) => `${q[0] + dx} ${q[1] + dy}`;
    return svg`
      <path class="round" d="M${p(g)}L${p(f)} ${p(e)} ${p(e, 2, 4)} ${p(f, -2, 7)}z"/>
      <path class="side" d="M${p(a)}L${p(h)} ${p(f)} ${p(g)}z"/>
      <path class="front" d="M${p(h)}L${p(d)} ${p(e)} ${p(f)}z"/>
      <path class="top" d="M${p(a)}L${p(b)} ${p(c)} ${p(d)} ${p(n)} ${p(h)}z"/>
      <path class="round" d="M${p(a, -1, 3)}L${p(a, 4, -1)} ${p(h, 3, -5)} ${p(n, 0, -4)} ${p(n, 0, 3)} ${p(h, -2, 3)}z"/>
      <path class="groove" d="M${p(b, 14, -1)}L${p(c)} ${p(d, -10, 8)} ${p(n, 0, -2)}z"/>
      <path class="pocket" d="M${p(b, 20, 10)}L${p(c, 0, 10)} ${p(c, 1, 15)} ${p(n, 2, -6)}z"/>
      <path class="round" d="M${p(c)}L${p(c, 6, -1)} ${p(d)} ${p(d, -1, 5)} ${p(d, -10, 7)}z"/>
      <path class="round" d="M${p(n, 1, -1)}L${p(n, 19, -6)} ${p(n, 18, 5)} ${p(n, 4, 9)}z"/>
      <path class="ink" d="M${p(a)}L${p(g)} ${p(f, -6, 0)} ${p(f, -2, 7)} ${p(e, 2, 4)} ${p(e)} ${p(d)} ${p(c, 6, -1)} ${p(b)}zM${p(a)}L${p(h, -3, 2)} ${p(f, -6, 0)}M${p(h, 4, 2)}L${p(f)} ${p(e)}M${p(h, -3, 2)}L${p(n, 0, 3)}M${p(a, 5, -1)}L${p(h, 3, -4)} ${p(n, 0, -4)}M${p(b, 10, -2)}L${p(n, 0, -4)}M${p(b, 16, 5)}L${p(c, 0, 5)}M${p(b, 20, 10)}L${p(c, 1, 10)}M${p(c)}L${p(c, 4, 14)} ${p(d, -10, 10)}M${p(c, 3, 0)}L${p(d, -10, 3)} ${p(d, -2, 0)}M${p(d, -10, 7)}L${p(d, -1, 5)}M${p(n, 2, 1)}L${p(n, 4, 9)} ${p(n, 18, 5)} ${p(n, 19, -6)}"/>`;
  }
}

@customElement("app-root")
class AppRoot extends LitElement {
  static styles = css`
    :host { display: flex; flex-direction: column; height: 100vh; overflow: hidden; background: #eee; }
    .work { display: flex; flex: 1; min-height: 0; overflow: hidden; }
  `;
  render() {
    return html`
      <pm-ribbon></pm-ribbon>
      <pm-plugin-bar></pm-plugin-bar>
      <div class="work"><pm-explorer></pm-explorer><pm-strategies></pm-strategies><pm-viewport></pm-viewport></div>`;
  }
}
